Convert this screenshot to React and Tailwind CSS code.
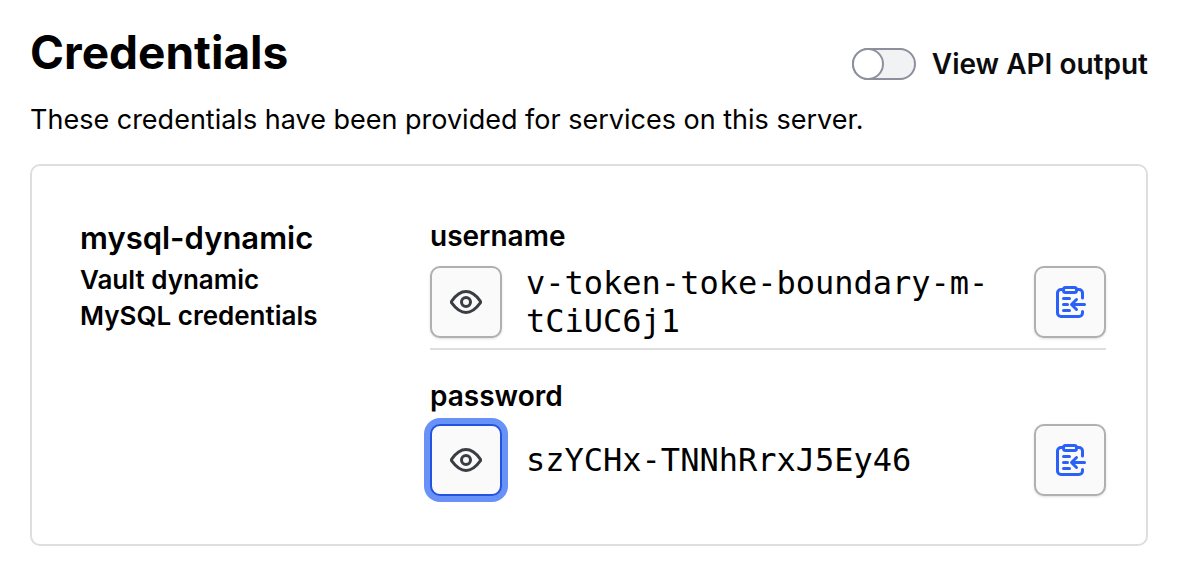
import { useState } from 'react';

const credentials = [
    { name: 'username', value: 'v-token-toke-boundary-m-tCiUC6j1' },
    { name: 'password', value: 'szYCHx-TNNhRrxJ5Ey46' },
];

const EyeIcon = () => (
    <svg viewBox="0 0 32 32" className="size-8" fill="none" stroke="currentColor" strokeWidth="3" strokeLinejoin="round" aria-hidden="true">
        <path d="M1.9 17.2a2 2 0 0 1 0-2.400C5.200 10.200 9.500 5.500 16 5.500S26.800 10.200 30.100 14.800a2 2 0 0 1 0 2.400C26.800 21.800 22.500 26.500 16 26.500S5.200 21.800 1.900 17.200Z" />
        <circle cx="16" cy="16" r="4.500" />
    </svg>
);

const CopyIcon = () => (
    <svg viewBox="0 0 32 32" className="size-8" fill="none" stroke="currentColor" strokeWidth="3" strokeLinecap="round" strokeLinejoin="round" aria-hidden="true">
        <path d="M9 3.500H7a3.500 3.500 0 0 0-3.500 3.500V27a3.500 3.500 0 0 0 3.500 3.500H25a3.500 3.500 0 0 0 3.500-3.500V25.500M23 3.500H25a3.500 3.500 0 0 1 3.500 3.500V12" />
        <rect x="9.500" y="1.500" width="13" height="5" rx="2" />
        <path d="M9.500 12.500h6M9.500 18.500h4M9.500 24.500h6M30.500 18.500H18.500M22.500 13.500l-5 5 5 5" />
    </svg>
);

const CredentialRow = ({ name, value }) => {
    const [focused, setFocused] = useState(name === 'password');

    return (
        <div className="pb-2 border-b-2 border-[#dedede] last:pb-0 last:border-b-0">
            <h3 className="mb-2.5 text-[28px] leading-9 font-semibold">{name}</h3>
            <div className="flex items-center gap-6">
                <button
                    type="button"
                    onFocus={() => setFocused(true)}
                    onBlur={() => setFocused(false)}
                    aria-label={`Hide ${name}`}
                    className={`size-18 shrink-0 flex items-center justify-center rounded-[10px] border-2 bg-[#fafafa] text-[#3b3d45] outline-none ${
                        focused ? 'border-[#2254de] ring-6 ring-[#6892f8]' : 'border-[#b0b0b0] shadow-sm'
                    }`}
                >
                    <EyeIcon />
                </button>
                <code className="flex-1 font-['DejaVu_Sans_Mono',monospace] text-[32px] leading-[38px]">{value}</code>
                <button
                    type="button"
                    aria-label={`Copy ${name}`}
                    className="size-18 shrink-0 flex items-center justify-center rounded-[10px] border-2 border-[#b0b0b0] bg-[#fafafa] text-[#2b61f6] shadow-sm"
                >
                    <CopyIcon />
                </button>
            </div>
        </div>
    );
};

const App = () => {
    const [apiOutput, setApiOutput] = useState(false);

    return (
        <main className="min-h-screen bg-white pl-[30px] pr-9 pt-6 pb-7 font-['Inter',sans-serif] text-black">
            <header className="flex items-center justify-between">
                <h1 className="text-[46px] leading-14 font-bold">Credentials</h1>
                <label className="mt-6 flex items-center gap-4 text-[28px] leading-8 font-semibold text-[#0c0c0e]">
                    <input
                        type="checkbox"
                        role="switch"
                        checked={apiOutput}
                        onChange={(e) => setApiOutput(e.target.checked)}
                        className="flex w-16 h-8 appearance-none rounded-full border-2 border-[#8c909c] bg-[#f1f2f3] before:-m-0.5 before:size-8 before:rounded-full before:border-2 before:border-[#8c909c] before:bg-white checked:justify-end checked:bg-[#1060ff]"
                    />
                    View API output
                </label>
            </header>
            <p className="mt-5 text-[27px] leading-10">These credentials have been provided for services on this server.</p>

            <section className="mt-6 flex gap-24 rounded-[10px] border-2 border-[#dedede] pl-12 pr-10 pt-[52px] pb-12">
                <div className="w-[254px] shrink-0">
                    <h2 className="text-[31px] leading-10 font-semibold">mysql-dynamic</h2>
                    <p className="mt-1 text-[26px] leading-9 font-semibold">Vault dynamic MySQL credentials</p>
                </div>
                <div className="flex flex-1 flex-col gap-7">
                    {credentials.map((c) => <CredentialRow key={c.name} {...c} />)}
                </div>
            </section>
        </main>
    );
};

export default App;
